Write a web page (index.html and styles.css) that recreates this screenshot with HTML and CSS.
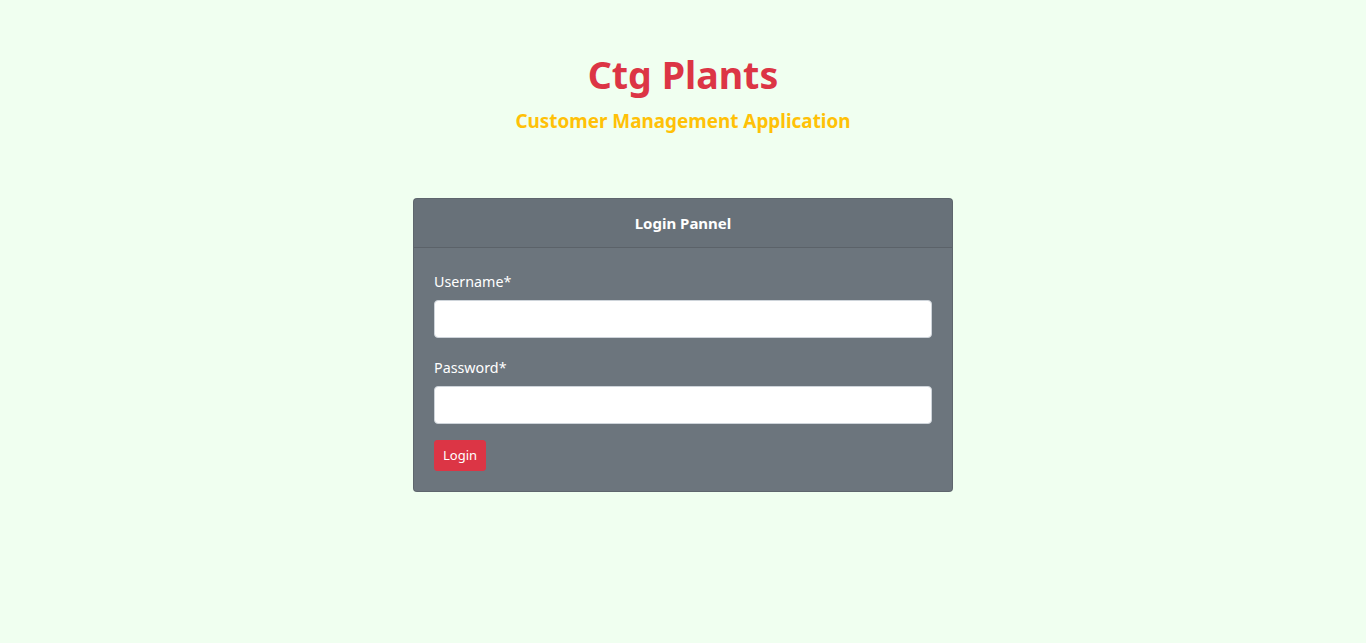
FILE: index.html
```html
<!DOCTYPE html>
<html lang="en">
<head>
<meta charset="utf-8">
<title>Ctg Plants</title>
<link rel="stylesheet" href="styles.css">
</head>
<body>
<div class="page">
  <header class="brand">
    <h1 class="brand-title">Ctg Plants</h1>
    <h5 class="brand-sub">Customer Management Application</h5>
  </header>
  <div class="card">
    <div class="card-header">Login Pannel</div>
    <form class="card-body">
      <div class="form-group">
        <label class="form-label" for="username">Username*</label>
        <input class="form-control" id="username" type="text">
      </div>
      <div class="form-group">
        <label class="form-label" for="password">Password*</label>
        <input class="form-control" id="password" type="password">
      </div>
      <button class="btn" type="button">Login</button>
    </form>
  </div>
</div>
</body>
</html>
```

FILE: styles.css
```css
* { box-sizing: border-box; }
html, body { margin: 0; padding: 0; }
body {
  background: #f0fff0;
  font-family: "Noto Sans", "Open Sans", sans-serif;
  font-size: 16px;
  line-height: 1.5;
  color: #212529;
}
.page {
  display: flex;
  flex-direction: column;
  align-items: center;
  padding-top: 51px;
}
.brand { text-align: center; }
.brand-title {
  margin: 0 0 10px;
  font-size: 37.6px;
  line-height: 48px;
  font-weight: 700;
  color: #dc3545;
}
.brand-sub {
  margin: 0;
  font-size: 18.9px;
  line-height: 24px;
  font-weight: 700;
  color: #ffc107;
}
.card {
  margin-top: 65px;
  width: 540px;
  background: #6c757d;
  border: 1px solid rgba(0,0,0,.125);
  border-radius: 4px;
  color: #fff;
}
.card-header {
  padding: 12px 20px;
  background: rgba(0,0,0,.03);
  border-bottom: 1px solid rgba(0,0,0,.125);
  text-align: center;
  font-weight: 700;
  font-size: 15px;
  line-height: 24px;
}
.card-body {
  display: flex;
  flex-direction: column;
  align-items: flex-start;
  padding: 20px;
  margin: 0;
}
.form-group {
  display: flex;
  flex-direction: column;
  width: 100%;
  margin-bottom: 16px;
}
.form-label {
  padding-top: 2px;
  margin-bottom: 6px;
  font-size: 14.3px;
  line-height: 24px;
}
.form-control {
  width: 100%;
  height: 38px;
  padding: 6px 12px;
  font: inherit;
  background: #fff;
  border: 1px solid #ced4da;
  border-radius: 4px;
}
.btn {
  height: 31px;
  padding: 4px 8px;
  font: inherit;
  font-size: 13px;
  line-height: 21px;
  color: #fff;
  background: #dc3545;
  border: 1px solid #dc3545;
  border-radius: 3px;
}
```
